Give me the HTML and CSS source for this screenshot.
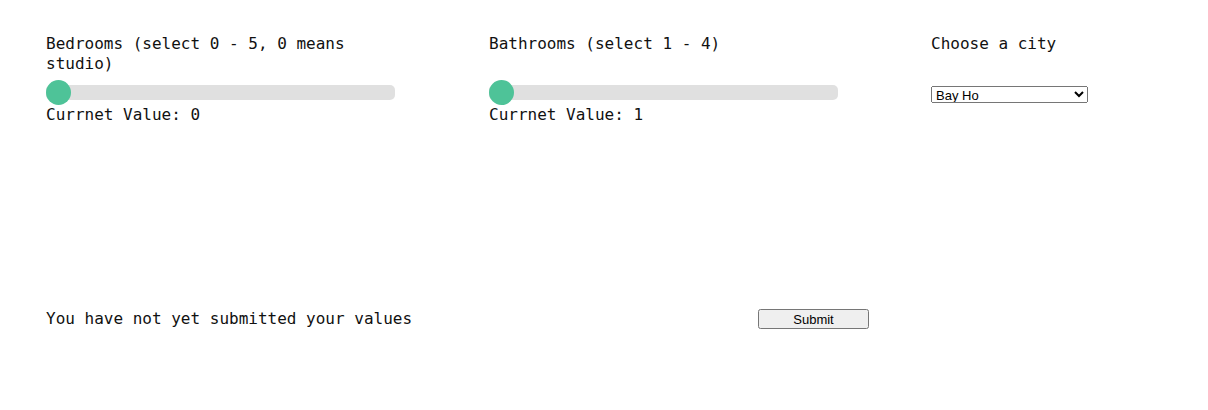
FILE: index.html
```html
<!DOCTYPE html>
<html>
<head>
<meta charset="utf-8">
<link rel="stylesheet" href="styles.css">
</head>
<body>
<div class="page">
  <div class="controls">
    <div class="label">Bedrooms (select 0 - 5, 0 means studio)</div>
    <div class="label">Bathrooms (select 1 - 4)</div>
    <div class="label">Choose a city</div>
    <input class="slider" type="range" min="0" max="5" value="0">
    <input class="slider" type="range" min="1" max="4" value="1">
    <div class="select-cell">
      <select class="city">
        <option>Bay Ho</option>
        <option>La Jolla</option>
        <option>Pacific Beach</option>
      </select>
    </div>
    <div class="value">Currnet Value: 0</div>
    <div class="value">Currnet Value: 1</div>
    <div></div>
  </div>
  <div class="footer">
    <div class="status">You have not yet submitted your values</div>
    <button class="submit">Submit</button>
  </div>
</div>
</body>
</html>
```

FILE: styles.css
```css
html, body {
  margin: 0;
  padding: 0;
  background: #ffffff;
}
.page {
  padding: 34px 0 0 46px;
  font-family: "DejaVu Sans Mono", "Liberation Mono", monospace;
  font-size: 16px;
  color: #111111;
}
.controls {
  display: grid;
  grid-template-columns: 443px 442px 220px;
  align-items: start;
}
.label {
  max-width: 349px;
  line-height: 20px;
}
.slider {
  -webkit-appearance: none;
  appearance: none;
  width: 349px;
  height: 15px;
  margin: 11px 0 5px 0;
  border-radius: 5px;
  background: #d3d3d3;
  outline: none;
  opacity: 0.7;
}
.slider::-webkit-slider-thumb {
  -webkit-appearance: none;
  appearance: none;
  width: 25px;
  height: 25px;
  border-radius: 50%;
  background: #04AA6D;
  cursor: pointer;
}
.select-cell {
  padding-top: 11px;
}
.city {
  width: 157px;
  height: 17px;
  font-family: "Liberation Sans", Arial, sans-serif;
  font-size: 13px;
  margin: 0;
}
.value {
  line-height: 20px;
}
.footer {
  display: flex;
  align-items: flex-start;
  margin-top: 184px;
}
.status {
  width: 712px;
  line-height: 20px;
}
.submit {
  width: 111px;
  height: 20px;
  font-family: "Liberation Sans", Arial, sans-serif;
  font-size: 13px;
  margin: 0;
  padding: 0;
}
```
